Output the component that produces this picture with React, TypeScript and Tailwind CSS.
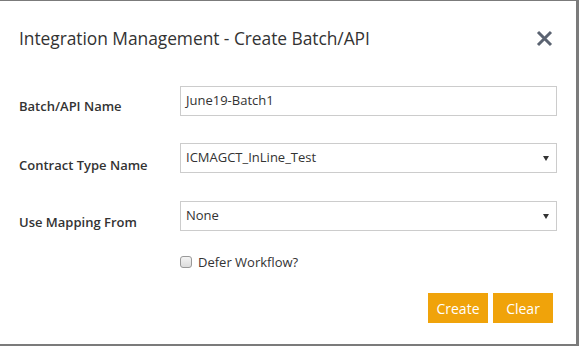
import React from "react";

function Caret() {
  return (
    <svg width="6" height="5" viewBox="0 0 6 5" className="shrink-0">
      <path d="M0 0 H6 L3 5 Z" fill="#333" />
    </svg>
  );
}

export default function App() {
  const font = { fontFamily: '"Open Sans", "Noto Sans", sans-serif' };
  return (
    <div className="w-[579px] h-[346px] bg-[#7b7b7b] overflow-hidden" style={font}>
      <div className="w-[576px] h-[343px] mt-px bg-white flex flex-col">
        <div className="flex items-center justify-between pl-[19px] pr-[23px] h-[74px]">
          <div className="text-[17.4px] text-[#333] tracking-[-0.05px]">Integration Management - Create Batch/API</div>
          <svg width="17" height="17" viewBox="0 0 17 17">
            <path d="M2 2 L15 15 M15 2 L2 15" stroke="#5b6371" strokeWidth="3" strokeLinecap="butt" />
          </svg>
        </div>
        <div className="flex flex-col pl-[19px] pr-[19px] mt-[11px] gap-[27px]">
          <div className="flex items-start">
            <div className="w-[161px] text-[13px] leading-[18px] font-semibold text-[#333] mt-[11px]">Batch/API Name</div>
            <div className="flex-1 h-[30px] border border-[#ccc] flex items-center px-[5px] text-[13px] text-[#333]">June19-Batch1</div>
          </div>
          <div className="flex items-start">
            <div className="w-[161px] text-[13px] leading-[18px] font-semibold text-[#333] mt-[13px]">Contract Type Name</div>
            <div className="flex-1 h-[30px] border border-[#ccc] flex items-center justify-between pl-[5px] pr-[7px] text-[13px] text-[#333]">
              <span>ICMAGCT_InLine_Test</span>
              <Caret />
            </div>
          </div>
          <div className="flex items-start">
            <div className="w-[161px] text-[13px] leading-[18px] font-semibold text-[#333] mt-[12px]">Use Mapping From</div>
            <div className="flex-1 h-[30px] border border-[#ccc] flex items-center justify-between pl-[5px] pr-[7px] text-[13px] text-[#333]">
              <span>None</span>
              <Caret />
            </div>
          </div>
        </div>
        <div className="flex items-center pl-[180px] mt-[24px] gap-[6px] h-[13px]">
          <div className="w-[12px] h-[12px] rounded-[3px] border border-[#999] bg-gradient-to-b from-[#f4f4f4] to-[#dcdcdc]" />
          <span className="text-[13px] leading-[18px] text-[#333]">Defer Workflow?</span>
        </div>
        <div className="flex justify-end gap-[5px] pr-[23px] mt-[25px]">
          <div className="w-[60px] h-[30px] bg-[#f0a30a] text-white text-[14px] flex items-center justify-center">Create</div>
          <div className="w-[60px] h-[30px] bg-[#f0a30a] text-white text-[14px] flex items-center justify-center">Clear</div>
        </div>
      </div>
    </div>
  );
}
